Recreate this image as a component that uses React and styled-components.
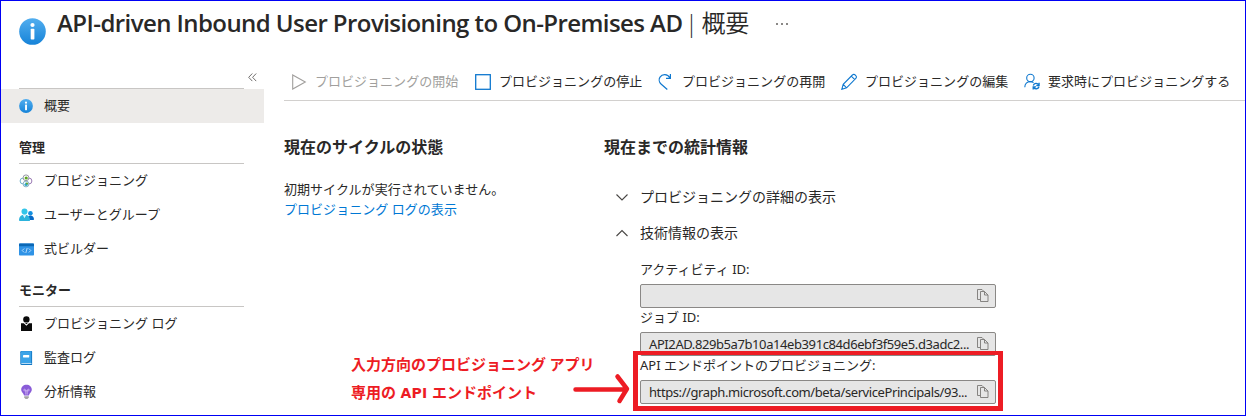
import React from "react";
import styled, { createGlobalStyle } from "styled-components";

const GlobalStyle = createGlobalStyle`
  * { box-sizing: border-box; }
  body {
    margin: 0;
    background: #fff;
    color: #292827;
    font-family: "Noto Sans", "Noto Sans CJK JP", sans-serif;
    font-size: 13px;
  }
`;

const Page = styled.div`
  position: relative;
  width: 1246px;
  height: 416px;
  border: 1px solid #0000f5;
  overflow: hidden;
  white-space: nowrap;
`;

const Header = styled.header`
  display: flex;
  height: 60px;
  padding: 0 18px;
`;

const HeaderIcon = styled.div`
  width: 38px;
  padding-top: 17px;
`;

const Title = styled.h1`
  margin: 5px 0 0;
  font: 600 24px/34px "Open Sans", "Noto Sans CJK JP", sans-serif;
  letter-spacing: ${(p) => p.$spacing}px;
`;

const TitleLight = styled.span`
  margin-left: -3px;
  font-weight: 350;
  font-family: "Open Sans", "Noto Sans CJK JP", sans-serif;
  letter-spacing: -0.4px;
  word-spacing: -2px;
`;

const More = styled.div`
  display: flex;
  gap: 3px;
  margin: 22px 0 0 27px;
`;

const Dot = styled.i`
  width: 2px;
  height: 2px;
  background: #8a8886;
`;

const Body = styled.div`
  display: flex;
`;

const Sidebar = styled.nav`
  width: 263px;
`;

const Collapse = styled.div`
  display: flex;
  justify-content: flex-end;
  height: 28px;
  padding: 12px 7px 0 0;
  background: linear-gradient(#c8c6c4, #c8c6c4) 18px 27px / 225px 1px no-repeat;
`;

const NavItem = styled.div`
  display: flex;
  align-items: center;
  height: 34px;
  padding: 0 0 2px 18px;
  background: ${(p) => (p.$selected ? "#edebe9" : "transparent")};
  line-height: 20px;
`;

const NavIcon = styled.span`
  display: flex;
  width: 25px;
  padding-top: 2px;
`;

const NavHeading = styled.h2`
  width: 225px;
  height: 41px;
  margin: 0 0 0 18px;
  padding-top: 14px;
  border-bottom: 1px solid #c8c6c4;
  font-size: 13px;
  line-height: 20px;
  font-weight: 600;
`;

const Main = styled.main`
  flex: 1;
  padding-left: 20px;
`;

const Toolbar = styled.div`
  display: flex;
  height: 40px;
  border-bottom: 1px solid #d2d0ce;
`;

const Command = styled.div`
  display: flex;
  width: ${(p) => p.$width}px;
  height: 40px;
  color: ${(p) => (p.$disabled ? "#a19f9d" : "#292827")};
  line-height: 40px;
  letter-spacing: 0.02px;
`;

const CommandIcon = styled.span`
  width: 31px;
  padding: 12px 0 0 7px;
  line-height: 0;
`;

const Columns = styled.div`
  display: flex;
`;

const Column = styled.section`
  width: ${(p) => p.$width}px;
`;

const Heading = styled.h2`
  margin: 34px 0 0;
  font-size: 16px;
  line-height: 24px;
  font-weight: 700;
`;

const Status = styled.p`
  margin: 20px 0 0;
  line-height: 20px;
  letter-spacing: 0.04px;
`;

const Link = styled.a`
  color: #0078d4;
`;

const Disclosures = styled.div`
  padding-top: 19px;
`;

const Disclosure = styled.div`
  display: flex;
  align-items: center;
  height: 36px;
  padding-left: 12px;
  font-size: 14px;
`;

const DisclosureIcon = styled.span`
  display: flex;
  width: 24px;
  padding-top: 2px;
`;

const Fields = styled.div`
  width: 392px;
  padding: 10px 0 0 36px;
`;

const Label = styled.div`
  height: 24px;
  line-height: 18px;
`;

const Field = styled.div`
  display: flex;
  align-items: center;
  justify-content: space-between;
  height: 24px;
  padding: 0 6px 0 8px;
  border: 1px solid #8a8886;
  border-radius: 2px;
  background: #e6e6e6;
  letter-spacing: ${(p) => p.$spacing || 0}px;
`;

const Highlight = styled.div`
  position: absolute;
  left: 632px;
  top: 350px;
  width: 370px;
  height: 60px;
  border: 5px solid #ed1c24;
  border-top-width: 4px;
`;

const Note = styled.div`
  position: absolute;
  left: 350px;
  top: 349px;
  color: #ed1c24;
  font: 700 15px/28px "Noto Sans CJK JP", sans-serif;
`;

const NoteLatin = styled.span`
  margin: 0 1px;
  font-family: "DejaVu Sans", sans-serif;
  font-size: 14px;
  letter-spacing: 0.3px;
`;

const Arrow = styled.svg`
  position: absolute;
  left: 568px;
  top: 369px;
`;

const InfoIcon = ({ size }) => (
  <svg width={size} height={size} viewBox="0 0 27 27">
    <defs>
      <linearGradient id={`info${size}`} x2="0" y2="1">
        <stop stopColor="#52aeef" />
        <stop offset="1" stopColor="#1683d8" />
      </linearGradient>
    </defs>
    <circle cx="13.5" cy="13.5" r="13.3" fill={`url(#info${size})`} />
    <circle cx="13.5" cy="7" r="2.1" fill="#fff" />
    <rect x="11.7" y="10.7" width="3.7" height="10.8" rx="0.8" fill="#fff" />
  </svg>
);

const ProvisioningIcon = () => (
  <svg width="14" height="14" viewBox="0 0 14 14" fill="none">
    <circle cx="4" cy="7" r="2.9" stroke="#6fb1cc" />
    <circle cx="10" cy="7" r="2.9" stroke="#9b7bb5" />
    <circle cx="7" cy="3.8" r="2.9" fill="#fff" stroke="#8c8c9c" strokeWidth=".9" />
    <circle cx="7" cy="10" r="2.9" fill="#fff" stroke="#7fa9bd" strokeWidth=".9" />
    <circle cx="7.2" cy="4" r="1.6" fill="#5ea51e" />
    <path d="M5 11 7 8.3 9.2 11 7 12.2z" fill="#32a8c9" />
    <circle cx="8" cy="9.4" r="1" fill="#62a61e" />
  </svg>
);

const UsersIcon = () => (
  <svg width="15" height="14" viewBox="0 0 15 14">
    <circle cx="11.4" cy="5.2" r="2.3" fill="#1490df" />
    <path d="M8 12c0-3 1.5-4.5 3.4-4.5S15 9 15 11.2c0 .6-.3.8-.8.8z" fill="#0869c7" />
    <circle cx="5.5" cy="3.6" r="3" fill="#32c5e9" />
    <path d="M0 12.2C0 8.5 2.3 6.7 5.5 6.7S11 8.5 11 12.2c0 .6-.4.8-.9.8H.9c-.5 0-.9-.2-.9-.8z" fill="#2cb3dc" />
    <path d="m3.8 6.9 1.7 3.4 1.7-3.4z" fill="#d8f5fc" />
  </svg>
);

const CodeIcon = () => (
  <svg width="15" height="13" viewBox="0 0 15 13">
    <rect y=".5" width="15" height="12" rx=".8" fill="#2f93e6" />
    <path d="M0 3.2V1.3C0 .8.3.5.8.5h13.4c.5 0 .8.3.8.8v1.9z" fill="#0b67b5" />
    <path d="M5.2 5.5 3.2 7.5l2 2M9.8 5.5l2 2-2 2M8.2 5l-1.4 5" fill="none" stroke="#c3e1fb" strokeWidth=".9" />
  </svg>
);

const PersonIcon = () => (
  <svg width="14" height="16" viewBox="0 0 14 16" fill="#0a0a0a">
    <circle cx="7.4" cy="3.4" r="3.2" />
    <path d="M2 7.2h2.8l2.6 2.5L10 7.2h3V15H2z" />
    <path d="m6 6.9 1.4 1.4 1.4-1.4z" />
  </svg>
);

const BookIcon = () => (
  <svg width="14" height="16" viewBox="0 0 14 16">
    <path d="M2.5 1h10c.4 0 .6.3.6.6v12.8c0 .4-.3.6-.6.6h-10c-.7 0-1.2-.5-1.2-1.2V2.2C1.3 1.5 1.8 1 2.5 1z" fill="#1479c4" />
    <path d="M3 1.2h9.2v11.7H2V2.2c0-.6.4-1 1-1z" fill="#3ba3e8" />
    <path d="M2.2 13h10.3v1H2.5z" fill="#b9dcf4" />
    <rect x="4" y="5" width="6.2" height="2.5" rx=".4" fill="#fff" />
  </svg>
);

const BulbIcon = () => (
  <svg width="15" height="16" viewBox="0 0 15 16">
    <path d="M7.5.8c3 0 5.3 2.1 5.3 4.8 0 2.9-2.5 3.7-2.8 6H5c-.3-2.3-2.8-3.1-2.8-6C2.2 2.9 4.5.8 7.5.8z" fill="#8a5cd8" />
    <path d="M6.8 10.6V6.8c0-2-2.2-2-2.1-.6.1.7.8.6 2.8.6s2.7.1 2.8-.6c.1-1.4-2.1-1.4-2.1.6v3.8" fill="none" stroke="#ddc5f7" strokeWidth=".7" />
    <path d="M5.2 12.3h4.6v1.2L8.5 15h-2l-1.3-1.5z" fill="#a5a5a5" />
  </svg>
);

const PlayIcon = () => (
  <svg width="17" height="17" viewBox="0 0 17 17" fill="none" stroke="#a19f9d" strokeWidth="1.1">
    <path d="M1.7 1.9v14.2L14.3 9z" />
  </svg>
);

const StopIcon = () => (
  <svg width="17" height="17" viewBox="0 0 17 17">
    <rect x=".7" y="1.7" width="14.6" height="14.6" fill="none" stroke="#0f78cf" strokeWidth="1.3" />
  </svg>
);

const RestartIcon = () => (
  <svg width="17" height="17" viewBox="0 0 17 17" fill="none" stroke="#0f78cf" strokeWidth="1.2">
    <path d="M9.3 16.5 3 11C1 9.2.7 6.2 2 4.2 4.2.8 9.4.5 12 5M12.4 1v4.4H8" />
  </svg>
);

const EditIcon = () => (
  <svg width="17" height="17" viewBox="0 0 17 17" fill="none" stroke="#0f78cf" strokeWidth="1.1">
    <path d="m.8 16.3 1.4-5L11.4 2a1.9 1.9 0 0 1 2.8 0l.6.6a1.9 1.9 0 0 1 0 2.8l-9.2 9.4-4.8 1.5zM10.3 3.2l3.5 3.5M2.2 11.3l3.4 3.5" />
  </svg>
);

const PersonSyncIcon = () => (
  <svg width="17" height="17" viewBox="0 0 17 17" fill="none" stroke="#0f78cf" strokeWidth="1.1">
    <circle cx="6.4" cy="4.9" r="3.7" />
    <path d="M.8 14.2c0-3.2 2.2-5.6 5.5-5.6 1.3 0 2.4.3 3.2 1" />
    <path d="M9.3 12.5c.7-2.4 4-2.9 5.4-.6M15.1 9.7v2.8h-2.8M15 13.8c-.7 2.3-3.9 2.7-5.4.7M9.2 16.6v-2.7H12" strokeWidth="1.3" />
  </svg>
);

const Chevron = ({ up }) => (
  <svg width="13" height="8" viewBox="0 0 13 8" fill="none" stroke="#484644" strokeWidth="1.1">
    <path d={up ? "M.5 7 6 1.5 11.5 7" : "M.5 1.5 6 7l5.5-5.5"} />
  </svg>
);

const CopyIcon = () => (
  <svg width="12" height="14" viewBox="0 0 12 14" fill="#e6e6e6" stroke="#7a7876" strokeWidth=".9">
    <path d="M3.5 10.5h-3v-10H5l2 2" />
    <path d="M3.5 2.5h4l3.5 3.5v6.5H3.5zM7.5 2.5V6H11" />
  </svg>
);

const commands = [
  { text: "プロビジョニングの開始", icon: <PlayIcon />, width: 184, disabled: true },
  { text: "プロビジョニングの停止", icon: <StopIcon />, width: 183 },
  { text: "プロビジョニングの再開", icon: <RestartIcon />, width: 183 },
  { text: "プロビジョニングの編集", icon: <EditIcon />, width: 183 },
  { text: "要求時にプロビジョニングする", icon: <PersonSyncIcon />, width: 220 },
];

const groups = [
  {
    title: "管理",
    items: [
      ["プロビジョニング", <ProvisioningIcon />],
      ["ユーザーとグループ", <UsersIcon />],
      ["式ビルダー", <CodeIcon />],
    ],
  },
  {
    title: "モニター",
    items: [
      ["プロビジョニング ログ", <PersonIcon />],
      ["監査ログ", <BookIcon />],
      ["分析情報", <BulbIcon />],
    ],
  },
];

const fields = [
  { label: "アクティビティ ID:", value: "" },
  { label: "ジョブ ID:", value: "API2AD.829b5a7b10a14eb391c84d6ebf3f59e5.d3adc2...", spacing: -0.41 },
  {
    label: "API エンドポイントのプロビジョニング:",
    value: "https://graph.microsoft.com/beta/servicePrincipals/93...",
    spacing: -0.41,
  },
];

export default function App() {
  return (
    <Page lang="ja">
      <GlobalStyle />
      <Header>
        <HeaderIcon>
          <InfoIcon size={27} />
        </HeaderIcon>
        <Title $spacing={-0.57}>
          API-driven Inbound User Provisioning to On-Premises AD <TitleLight>| 概要</TitleLight>
        </Title>
        <More>
          <Dot />
          <Dot />
          <Dot />
        </More>
      </Header>
      <Body>
        <Sidebar>
          <Collapse>
            <svg width="9" height="9" viewBox="0 0 9 9" fill="none" stroke="#605e5c" strokeWidth=".9">
              <path d="M4.3.5.7 4.3l3.6 3.8M8.2.5 4.6 4.3l3.6 3.8" />
            </svg>
          </Collapse>
          <NavItem $selected>
            <NavIcon>
              <InfoIcon size={14} />
            </NavIcon>
            概要
          </NavItem>
          {groups.map((group) => (
            <React.Fragment key={group.title}>
              <NavHeading>{group.title}</NavHeading>
              {group.items.map(([text, icon]) => (
                <NavItem key={text}>
                  <NavIcon>{icon}</NavIcon>
                  {text}
                </NavItem>
              ))}
            </React.Fragment>
          ))}
        </Sidebar>
        <Main>
          <Toolbar>
            {commands.map((c) => (
              <Command key={c.text} $width={c.width} $disabled={c.disabled}>
                <CommandIcon>{c.icon}</CommandIcon>
                {c.text}
              </Command>
            ))}
          </Toolbar>
          <Columns>
            <Column $width={320}>
              <Heading>現在のサイクルの状態</Heading>
              <Status>
                初期サイクルが実行されていません。
                <br />
                <Link>プロビジョニング ログの表示</Link>
              </Status>
            </Column>
            <Column $width={420}>
              <Heading>現在までの統計情報</Heading>
              <Disclosures>
                <Disclosure>
                  <DisclosureIcon>
                    <Chevron />
                  </DisclosureIcon>
                  プロビジョニングの詳細の表示
                </Disclosure>
                <Disclosure>
                  <DisclosureIcon>
                    <Chevron up />
                  </DisclosureIcon>
                  技術情報の表示
                </Disclosure>
              </Disclosures>
              <Fields>
                {fields.map((f) => (
                  <React.Fragment key={f.label}>
                    <Label>{f.label}</Label>
                    <Field $spacing={f.spacing}>
                      <span>{f.value}</span>
                      <CopyIcon />
                    </Field>
                  </React.Fragment>
                ))}
              </Fields>
            </Column>
          </Columns>
        </Main>
      </Body>
      <Note>
        入力方向のプロビジョニング アプリ
        <br />
        専用の <NoteLatin>API</NoteLatin> エンドポイント
      </Note>
      <Highlight />
      <Arrow width="62" height="36" viewBox="0 0 62 36" fill="none" stroke="#ed1c24" strokeWidth="4.5">
        <path d="M6.5 19.5h49M48.5 6.5l9.5 12.3-7.5 12.2" strokeLinecap="round" strokeLinejoin="round" />
      </Arrow>
    </Page>
  );
}
